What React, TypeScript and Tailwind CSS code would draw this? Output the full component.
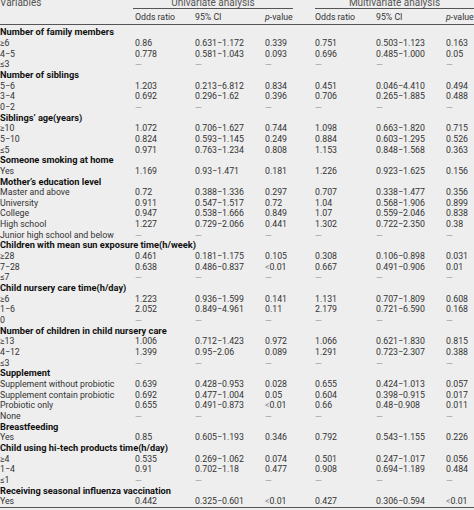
import React from 'react';

type Row = { label: string; head?: boolean; v?: string[] };

const D = '—';
const NONE = [D, D, D, D, D, D];

const rows: Row[] = [
  { label: 'Number of family members', head: true },
  { label: '≥6', v: ['0.86', '0.631−1.172', '0.339', '0.751', '0.503−1.123', '0.163'] },
  { label: '4−5', v: ['0.778', '0.581−1.043', '0.093', '0.696', '0.485−1.000', '0.05'] },
  { label: '≤3', v: NONE },
  { label: 'Number of siblings', head: true },
  { label: '5−6', v: ['1.203', '0.213−6.812', '0.834', '0.451', '0.046−4.410', '0.494'] },
  { label: '3−4', v: ['0.692', '0.296−1.62', '0.396', '0.706', '0.265−1.885', '0.488'] },
  { label: '0−2', v: NONE },
  { label: 'Siblings’ age(years)', head: true },
  { label: '≥10', v: ['1.072', '0.706−1.627', '0.744', '1.098', '0.663−1.820', '0.715'] },
  { label: '5−10', v: ['0.824', '0.593−1.145', '0.249', '0.884', '0.603−1.295', '0.526'] },
  { label: '≤5', v: ['0.971', '0.763−1.234', '0.808', '1.153', '0.848−1.568', '0.363'] },
  { label: 'Someone smoking at home', head: true },
  { label: 'Yes', v: ['1.169', '0.93−1.471', '0.181', '1.226', '0.923−1.625', '0.156'] },
  { label: 'Mother’s education level', head: true },
  { label: 'Master and above', v: ['0.72', '0.388−1.336', '0.297', '0.707', '0.338−1.477', '0.356'] },
  { label: 'University', v: ['0.911', '0.547−1.517', '0.72', '1.04', '0.568−1.906', '0.899'] },
  { label: 'College', v: ['0.947', '0.538−1.666', '0.849', '1.07', '0.559−2.046', '0.838'] },
  { label: 'High school', v: ['1.227', '0.729−2.066', '0.441', '1.302', '0.722−2.350', '0.38'] },
  { label: 'Junior high school and below', v: NONE },
  { label: 'Children with mean sun exposure time(h/week)', head: true },
  { label: '≥28', v: ['0.461', '0.181−1.175', '0.105', '0.308', '0.106−0.898', '0.031'] },
  { label: '7−28', v: ['0.638', '0.486−0.837', '<0.01', '0.667', '0.491−0.906', '0.01'] },
  { label: '≤7', v: NONE },
  { label: 'Child nursery care time(h/day)', head: true },
  { label: '≥6', v: ['1.223', '0.936−1.599', '0.141', '1.131', '0.707−1.809', '0.608'] },
  { label: '1−6', v: ['2.052', '0.849−4.961', '0.11', '2.179', '0.721−6.590', '0.168'] },
  { label: '0', v: NONE },
  { label: 'Number of children in child nursery care', head: true },
  { label: '≥13', v: ['1.006', '0.712−1.423', '0.972', '1.066', '0.621−1.830', '0.815'] },
  { label: '4−12', v: ['1.399', '0.95−2.06', '0.089', '1.291', '0.723−2.307', '0.388'] },
  { label: '≤3', v: NONE },
  { label: 'Supplement', head: true },
  { label: 'Supplement without probiotic', v: ['0.639', '0.428−0.953', '0.028', '0.655', '0.424−1.013', '0.057'] },
  { label: 'Supplement contain probiotic', v: ['0.692', '0.477−1.004', '0.05', '0.604', '0.398−0.915', '0.017'] },
  { label: 'Probiotic only', v: ['0.655', '0.491−0.873', '<0.01', '0.66', '0.48−0.908', '0.011'] },
  { label: 'None', v: NONE },
  { label: 'Breastfeeding', head: true },
  { label: 'Yes', v: ['0.85', '0.605−1.193', '0.346', '0.792', '0.543−1.155', '0.226'] },
  { label: 'Child using hi-tech products time(h/day)', head: true },
  { label: '≥4', v: ['0.535', '0.269−1.062', '0.074', '0.501', '0.247−1.017', '0.056'] },
  { label: '1−4', v: ['0.91', '0.702−1.18', '0.477', '0.908', '0.694−1.189', '0.484'] },
  { label: '≤1', v: NONE },
  { label: 'Receiving seasonal influenza vaccination', head: true },
  { label: 'Yes', v: ['0.442', '0.325−0.601', '<0.01', '0.427', '0.306−0.594', '<0.01'] },
];

const cols = 'grid grid-cols-[135px_60px_70px_50px_61px_70px_28px]';

function Cell({ text }: { text: string }) {
  if (text === D) {
    return <div className="text-[#a0a0a0] translate-y-[1px]">—</div>;
  }
  if (text.startsWith('<')) {
    return (
      <div className="whitespace-nowrap">
        <span className="text-[#888]">&lt;</span>
        {text.slice(1)}
      </div>
    );
  }
  return <div className="whitespace-nowrap">{text}</div>;
}

function PValue() {
  return (
    <div>
      <span className="italic">p</span>-value
    </div>
  );
}

export default function App() {
  return (
    <div
      className="w-[474px] h-[510px] overflow-hidden bg-[#eeeeee] text-[#333] text-[8.75px] leading-[10px]"
      style={{ fontFamily: 'Roboto, "Open Sans", sans-serif' }}
    >
      {/* header row 1 */}
      <div className="flex h-[9px] leading-[8px] text-[10px] text-[#555] whitespace-nowrap">
        <div className="w-[133px] -mt-[1px]">Variables</div>
        <div className="w-[160px] border-b border-[#555] text-center -mt-[1px]">Univariate analysis</div>
        <div className="w-[22px]" />
        <div className="w-[159px] border-b border-[#555] text-center -mt-[1px]">Multivariate analysis</div>
      </div>

      {/* header row 2 */}
      <div className={`${cols} h-[16px] items-center border-b border-[#555] whitespace-nowrap`}>
        <div />
        <div>Odds ratio</div>
        <div>95% CI</div>
        <PValue />
        <div>Odds ratio</div>
        <div>95% CI</div>
        <PValue />
      </div>

      {/* body */}
      <div className="pt-[2px] border-b border-[#555]">
        {rows.map((r, i) =>
          r.head ? (
            <div
              key={i}
              className="h-[10.67px] flex items-center font-bold text-[9.25px] text-[#111] whitespace-nowrap"
            >
              {r.label}
            </div>
          ) : (
            <div key={i} className={`${cols} h-[10.67px] items-center`}>
              <div className="whitespace-nowrap">{r.label}</div>
              {r.v!.map((t, j) => (
                <Cell key={j} text={t} />
              ))}
            </div>
          )
        )}
      </div>
    </div>
  );
}
